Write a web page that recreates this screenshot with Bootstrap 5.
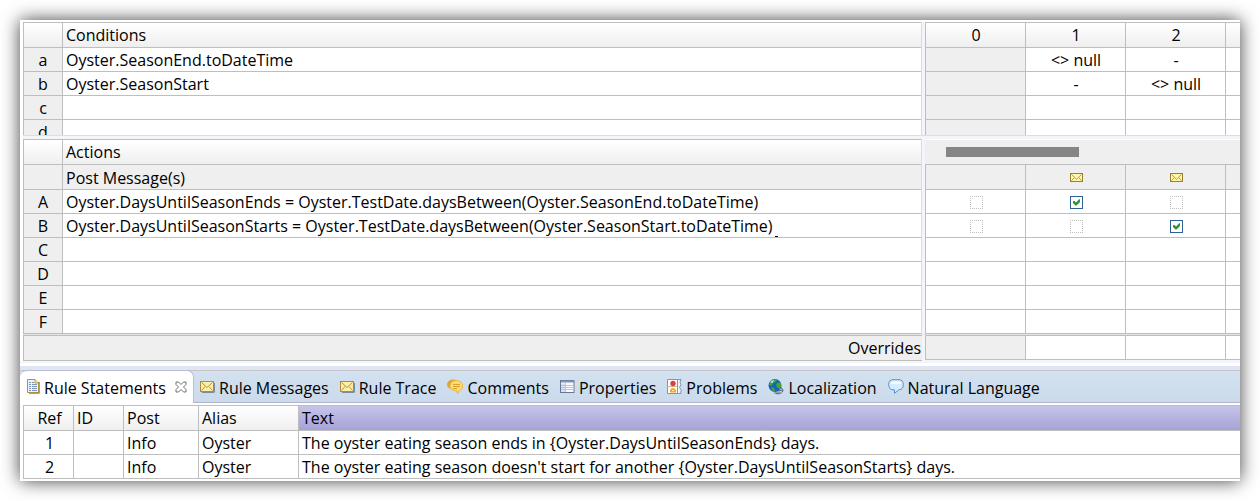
<!DOCTYPE html>
<html lang="en">
<head>
<meta charset="utf-8">
<meta name="viewport" content="width=device-width, initial-scale=1">
<title>Rulesheet</title>
<link href="https://cdn.jsdelivr.net/npm/bootstrap@5.3.0/dist/css/bootstrap.min.css" rel="stylesheet">
<script src="https://cdn.jsdelivr.net/npm/bootstrap@5.3.0/dist/js/bootstrap.bundle.min.js"></script>
<style>
  :root { --line: #bebebe; --head: #efefef; --pane: #f4f4fb; }
  body { font-family: "Open Sans", "Noto Sans", sans-serif; font-size: 16px; line-height: 24px; color: #000; background: #fff; }
  .editor { margin: 20px; background: #fff; box-shadow: 0 0 17px rgba(0,0,0,.75); padding: 2px 0; }
  .sheet { padding-left: 3px; }
  .pair { background: var(--pane); }
  .left-pane { border-right: 1px solid #dcdcdc; background: #fff; }
  .right-pane { flex: 0 0 315px; margin-left: 3px; background: #fff; }
  .grid { width: 100%; table-layout: fixed; border-collapse: separate; border-spacing: 0; }
  .wide { width: 400px; }
  .grid th, .grid td { font-weight: 400; height: 24px; line-height: 21px; padding: 2px 3px 0; white-space: nowrap; border-left: 1px solid var(--line); border-bottom: 1px solid var(--line); }
  .grid.wide th, .grid.wide td { padding: 2px 2px 0 3px; }
  .grid .tall th, .grid .tall td { height: 25px; line-height: 22px; padding-top: 1px; }
  .grid thead th, .grid.wide thead th { border-top: 1px solid var(--line); height: 26px; line-height: 22px; padding-top: 0; background: linear-gradient(#fff, #efefef); }
  .grid .mark-col { width: 39px; text-align: center; background: var(--head); padding-left: 0; padding-right: 0; }
  .grid thead .mark-col { background: linear-gradient(#fff, #efefef); }
  .shade, .grid .shade { background: var(--head); }
  .conditions { height: 114px; border-bottom: 1px solid #dedee2; }
  .sash { height: 3px; background: var(--pane); }
  .scroll-row { height: 25px; background: var(--head); border-top: 1px solid #fff; padding: 7px 0 0 21px; }
  .thumb { width: 133px; height: 10px; background: #858585; }
  .grid.wide .mail-row td { border-top: 1px solid var(--line); height: 26px; padding-top: 0; }
  .overrides { border: 1px solid var(--line); border-right: 0; background: var(--head); height: 26px; line-height: 24px; padding-right: 1px; }
  .grid .override-row td { border-top: 1px solid var(--line); height: 25px; }
  .gap-line { height: 1px; background: #e4e4e4; }
  .stroke { width: 3px; height: 1px; margin-left: 2px; background: #000; }
  .tick { appearance: none; display: block; width: 13px; height: 13px; margin: 0 auto; border: 1px dotted #bdbdbd; background: transparent; }
  .tick:checked { border: 1px solid #2c6096; background: #fff url("data:image/svg+xml,%3Csvg xmlns='http://www.w3.org/2000/svg' viewBox='0 0 11 11'%3E%3Cpath d='M2 4h1.5L5 5.500 8 2.500 9 2v3L5.500 8.500H4.500L2 6z' fill='%23329232'/%3E%3C/svg%3E"); }
  .mail-cell svg { display: block; margin: 0 auto; }
  .foot { height: 2px; background: var(--pane); }
  .band { height: 4px; margin-top: 3px; background: #dfe5f6; }
  .tabs { height: 33px; border-top: 1px solid #c6c6c6; border-bottom: 1px solid #aeb5cb; background: linear-gradient(#d3e1f0, #cbdbeb); }
  .tab { border: 0; background: none; padding: 0 0 0 6px; height: 31px; color: #000; white-space: nowrap; display: flex; align-items: center; gap: 4px; margin-right: 5px; }
  .tab span { padding-top: 3px; }
  .tab.current { background: #fff; height: 33px; margin: -1px 0 0; width: 174px; padding: 0 6px 1px 7px; border: 1px solid #b9bfcf; border-width: 1px 1px 0 0; border-radius: 7px 7px 0 0; }
  .tab.current .close { margin-left: auto; }
  .tab svg { flex: none; }
  .statements { margin: 2px 0 0 3px; }
  .statements .ref { width: 50px; text-align: center; padding-left: 5px; }
  .statements .ident { width: 50px; }
  .statements .post { width: 75px; }
  .statements .alias { width: 100px; }
  .grid thead .sorted { background: linear-gradient(#c7c4eb, #a5a2d7); }
</style>
</head>
<body>
<svg class="d-none">
  <symbol id="mail" viewBox="0 0 13 9"><rect x=".5" y=".5" width="12" height="8" fill="#fff6a8" stroke="#a17c32"/><path d="M1.500 1.500l5 4.800 5-4.800M1.500 7.500l3-3M11.500 7.500l-3-3" fill="none" stroke="#b99d55"/></symbol>
  <symbol id="mail-tab" viewBox="0 0 15 12"><path d="M2 2h12.500v9.500H2z" fill="#2f3550"/><rect x=".5" y=".5" width="13" height="10" fill="#fdf0a4" stroke="#b08b3e"/><path d="M1.500 1.500L7 6.500l5.500-5M1.500 9.500l3.500-4M12.500 9.500L9 5.500" fill="none" stroke="#b9924a"/></symbol>
</svg>

<main class="editor">
  <div class="sheet">
    <section class="pair conditions d-flex overflow-hidden">
      <div class="left-pane flex-fill">
        <table class="grid">
          <thead><tr><th class="mark-col"></th><th scope="col">Conditions</th></tr></thead>
          <tbody>
            <tr><th class="mark-col" scope="row">a</th><td>Oyster.SeasonEnd.toDateTime</td></tr>
            <tr><th class="mark-col" scope="row">b</th><td>Oyster.SeasonStart</td></tr>
            <tr><th class="mark-col" scope="row">c</th><td></td></tr>
            <tr><th class="mark-col" scope="row">d</th><td></td></tr>
          </tbody>
        </table>
      </div>
      <div class="right-pane overflow-hidden">
        <table class="grid wide text-center">
          <thead><tr><th scope="col">0</th><th scope="col">1</th><th scope="col">2</th><th></th></tr></thead>
          <tbody>
            <tr><td class="shade"></td><td>&lt;&gt; null</td><td>-</td><td></td></tr>
            <tr><td class="shade"></td><td>-</td><td>&lt;&gt; null</td><td></td></tr>
            <tr><td class="shade"></td><td></td><td></td><td></td></tr>
            <tr><td class="shade"></td><td></td><td></td><td></td></tr>
          </tbody>
        </table>
      </div>
    </section>
    <div class="sash"></div>
    <section class="pair d-flex">
      <div class="left-pane flex-fill">
        <table class="grid">
          <thead><tr><th class="mark-col"></th><th scope="col">Actions</th></tr></thead>
          <tbody>
            <tr class="tall"><th class="mark-col"></th><td class="shade">Post Message(s)</td></tr>
            <tr><th class="mark-col" scope="row">A</th><td>Oyster.DaysUntilSeasonEnds = Oyster.TestDate.daysBetween(Oyster.SeasonEnd.toDateTime)</td></tr>
            <tr><th class="mark-col" scope="row">B</th><td><div class="d-flex align-items-end">Oyster.DaysUntilSeasonStarts = Oyster.TestDate.daysBetween(Oyster.SeasonStart.toDateTime)<span class="stroke"></span></div></td></tr>
            <tr><th class="mark-col" scope="row">C</th><td></td></tr>
            <tr><th class="mark-col" scope="row">D</th><td></td></tr>
            <tr><th class="mark-col" scope="row">E</th><td></td></tr>
            <tr><th class="mark-col" scope="row">F</th><td></td></tr>
          </tbody>
        </table>
      </div>
      <div class="right-pane overflow-hidden">
        <div class="scroll-row"><div class="thumb"></div></div>
        <table class="grid wide">
          <tbody>
            <tr class="mail-row">
              <td class="shade"></td>
              <td class="shade mail-cell"><svg width="13" height="9"><use href="#mail"/></svg></td>
              <td class="shade mail-cell"><svg width="13" height="9"><use href="#mail"/></svg></td>
              <td class="shade"></td>
            </tr>
            <tr><td><input class="tick" type="checkbox" aria-label="Action A, rule 0"></td><td><input class="tick" type="checkbox" checked aria-label="Action A, rule 1"></td><td><input class="tick" type="checkbox" aria-label="Action A, rule 2"></td><td></td></tr>
            <tr><td><input class="tick" type="checkbox" aria-label="Action B, rule 0"></td><td><input class="tick" type="checkbox" aria-label="Action B, rule 1"></td><td><input class="tick" type="checkbox" checked aria-label="Action B, rule 2"></td><td></td></tr>
            <tr><td></td><td></td><td></td><td></td></tr>
            <tr><td></td><td></td><td></td><td></td></tr>
            <tr><td></td><td></td><td></td><td></td></tr>
            <tr><td></td><td></td><td></td><td></td></tr>
          </tbody>
        </table>
      </div>
    </section>
    <div class="gap-line"></div>
    <section class="pair d-flex">
      <div class="flex-fill overrides text-end">Overrides</div>
      <div class="right-pane overflow-hidden align-self-start">
        <table class="grid wide"><tbody><tr class="override-row"><td class="shade"></td><td></td><td></td><td></td></tr></tbody></table>
      </div>
    </section>
  </div>
  <div class="foot"></div>
  <div class="band"></div>

  <div class="tabs d-flex" role="tablist">
    <button class="tab current" type="button" role="tab" aria-selected="true">
      <svg width="13" height="15" viewBox="0 0 13 15"><path d="M2 3h10.500v11.500H2z" fill="#313c5c"/><path d="M.5.5h7.500L11.500 4v9.500H.5z" fill="#eef3fb" stroke="#b0923f"/><path d="M8 .5V4h3.500" fill="#ffe9a3" stroke="#c09a45"/><path d="M2 3.500h2M5 3.500h2M2 5.500h2M5 5.500h5M2 7.500h2M5 7.500h5M2 9.500h2M5 9.500h5M2 11.500h2M5 11.500h5" stroke="#7c95bf"/></svg>
      <span>Rule Statements</span>
      <svg class="close" width="12" height="12" viewBox="0 0 12 12"><path d="M1 1h2.500L6 3.500 8.500 1H11v2.500L8.500 6 11 8.500V11H8.500L6 8.500 3.500 11H1V8.500L3.500 6 1 3.500z" fill="#fff" stroke="#6e6e6e"/></svg>
    </button>
    <button class="tab" type="button" role="tab"><svg width="15" height="12"><use href="#mail-tab"/></svg><span>Rule Messages</span></button>
    <button class="tab" type="button" role="tab"><svg width="15" height="12"><use href="#mail-tab"/></svg><span>Rule Trace</span></button>
    <button class="tab" type="button" role="tab"><svg width="16" height="15" viewBox="0 0 16 15"><ellipse cx="6" cy="5.500" rx="6" ry="5" fill="#d9a63b"/><path d="M9 1.500c4 0 6.500 2.300 6.500 5.500 0 2.400-1.300 3.700-3 4.500l-2 3-.5-2.700C5.500 11.800 3 9.800 3 7s2.300-5.500 6-5.500z" fill="#ffdd68" stroke="#e8b440"/><path d="M6 5.500h7M6 7.500h7M6 9.500h4" stroke="#d9a038"/></svg><span>Comments</span></button>
    <button class="tab" type="button" role="tab"><svg width="15" height="13" viewBox="0 0 15 13"><rect x=".5" y=".5" width="13.500" height="12" fill="#f8fbff" stroke="#6b7694"/><path d="M1 1.500h13" stroke="#7d93bb" stroke-width="2"/><path d="M1 3.500h4V12H1z" fill="#d5e2f3"/><path d="M5.500 3v9M1 5.500h13M1 7.500h13M1 9.500h13" stroke="#b9c6da"/></svg><span>Properties</span></button>
    <button class="tab" type="button" role="tab"><svg width="15" height="15" viewBox="0 0 15 15"><path d="M.5.5h10v14H.5z" fill="#fff" stroke="#8792ad"/><path d="M10.500.500h3.500l-1 3 1 2-1.500 3 1.500 2v4h-3.500z" fill="#eef3fb" stroke="#8792ad"/><path d="M.5 7.500h9.500" stroke="#c9bfa0"/><circle cx="6" cy="4.500" r="2.700" fill="#e63a40"/><path d="M3 13.500v-2.500Q4 9 6 9t3 2v2.500z" fill="#f7a82a"/><path d="M5 11.500h2" stroke="#fff1a8"/></svg><span>Problems</span></button>
    <button class="tab" type="button" role="tab"><svg width="16" height="16" viewBox="0 0 16 16"><path d="M8 14.500c3 1 7-.5 7-3.500l-3-4" fill="#c1c8d2" stroke="#5b6779"/><path d="M6 14h6M10 12l5-1" stroke="#626d80"/><circle cx="7" cy="6.500" r="6.500" fill="#1764bd"/><path d="M3 2C5 0 8 0 9 1L7 3.500 5 4 4 6.500 1 6zM8 5l4-2 1.300 3L12 10l-3-1.500zM3 8l3 1 1 3-2 .5z" fill="#44a832"/><path d="M2 3.500Q4 .800 6 1.500L4.500 4z" fill="#a7e3ff"/></svg><span>Localization</span></button>
    <button class="tab" type="button" role="tab"><svg width="16" height="15" viewBox="0 0 16 15"><path d="M5 .7h6c3 0 4.300 2 4.300 4.800S14 10.800 11 10.800L6.500 14.300V10.800H5C2 10.800.7 8.300.7 5.500S2 .7 5 .7z" fill="#d5edff" stroke="#5a8fc7"/><path d="M3 5Q3 2.500 6 2.500h5Q13 3 13 5z" fill="#f5fbff"/></svg><span>Natural Language</span></button>
  </div>

  <div class="statements">
    <table class="grid">
      <thead><tr><th class="ref" scope="col">Ref</th><th class="ident" scope="col">ID</th><th class="post" scope="col">Post</th><th class="alias" scope="col">Alias</th><th class="sorted" scope="col">Text</th></tr></thead>
      <tbody>
        <tr><td class="ref">1</td><td></td><td>Info</td><td>Oyster</td><td>The oyster eating season ends in {Oyster.DaysUntilSeasonEnds} days.</td></tr>
        <tr><td class="ref">2</td><td></td><td>Info</td><td>Oyster</td><td>The oyster eating season doesn't start for another {Oyster.DaysUntilSeasonStarts} days.</td></tr>
      </tbody>
    </table>
  </div>
</main>
</body>
</html>
